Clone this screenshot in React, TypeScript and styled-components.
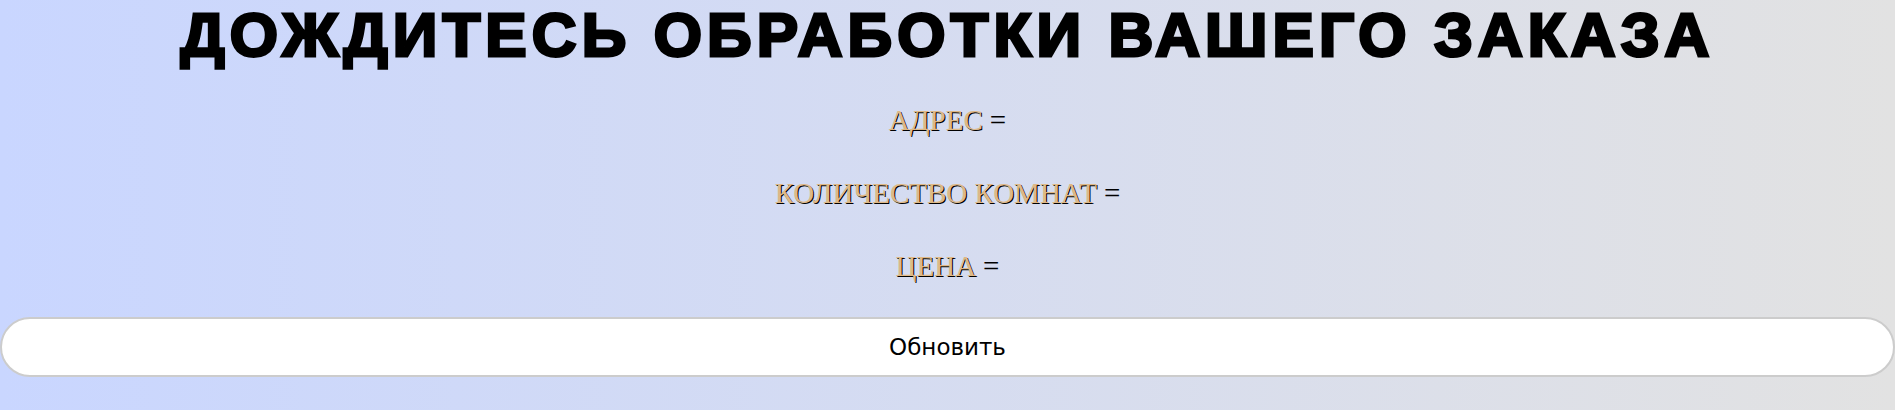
import React from "react";
import styled, { createGlobalStyle } from "styled-components";

const Global = createGlobalStyle`
  html, body { margin: 0; padding: 0; }
  body {
    min-height: 410px;
    background: linear-gradient(to right, #c9d6ff, #e2e2e2);
  }
`;

const Page = styled.div`
  display: flex;
  flex-direction: column;
  align-items: center;
`;

const Title = styled.h1`
  margin: 0 0 14px;
  font-family: "Liberation Sans", Arial, sans-serif;
  font-weight: 700;
  font-size: 62px;
  line-height: 70px;
  color: #000;
  -webkit-text-stroke: 3px #000;
  letter-spacing: 5.1px;
  text-align: center;
`;

const Field = styled.p`
  margin: 0;
  height: 73px;
  display: flex;
  align-items: center;
  font-family: "Liberation Serif", "Times New Roman", serif;
  font-size: 29px;
  color: #000;
`;

const Label = styled.span`
  color: #deb887;
  text-shadow: 1px 1px 0 #000;
  margin-right: 7px;
`;

const RefreshButton = styled.button`
  align-self: stretch;
  height: 60px;
  margin-top: 14px;
  background: #fff;
  border: 2px solid #cccccc;
  border-radius: 30px;
  font-family: "DejaVu Sans", Tahoma, sans-serif;
  font-size: 23px;
  color: #000;
  cursor: pointer;
`;

export default function App() {
  return (
    <>
      <Global />
      <Page>
        <Title>ДОЖДИТЕСЬ ОБРАБОТКИ ВАШЕГО ЗАКАЗА</Title>
        <Field><Label>АДРЕС</Label>=</Field>
        <Field><Label>КОЛИЧЕСТВО КОМНАТ</Label>=</Field>
        <Field><Label>ЦЕНА</Label>=</Field>
        <RefreshButton>Обновить</RefreshButton>
      </Page>
    </>
  );
}
